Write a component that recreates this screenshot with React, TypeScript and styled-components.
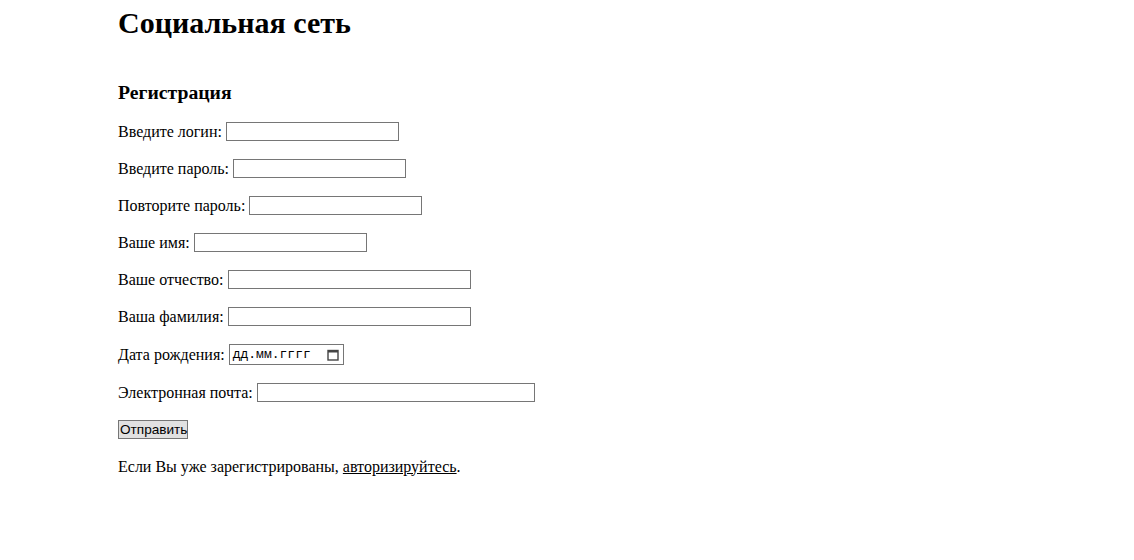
import React from "react";
import styled, { createGlobalStyle } from "styled-components";

const Global = createGlobalStyle`
  html, body { margin: 0; padding: 0; background: #ffffff; }
  body { font-family: "Liberation Serif", "Times New Roman", serif; color: #000; }
`;

const Page = styled.div`
  padding: 5px 118px 0;
  display: flex;
  flex-direction: column;
`;

const Title = styled.h1`
  margin: 0;
  font-size: 30px;
  font-weight: bold;
  line-height: 36px;
`;

const Subtitle = styled.h3`
  margin: 41px 0 0;
  font-size: 19.7px;
  font-weight: bold;
  line-height: 21px;
`;

const Form = styled.form`
  display: flex;
  flex-direction: column;
  gap: 16px;
  margin-top: 18px;
`;

const Row = styled.div<{ $h?: number }>`
  display: flex;
  align-items: center;
  height: ${(p) => p.$h ?? 21}px;
  font-size: 16px;
  white-space: pre;
`;

const Field = styled.input<{ $w: number }>`
  box-sizing: border-box;
  width: ${(p) => p.$w}px;
  height: 19px;
  margin: 0 0 0 4px;
  padding: 1px 2px;
  border: 1px solid #767676;
  border-radius: 0;
  background: #fff;
  font-family: "Liberation Sans", Arial, sans-serif;
  font-size: 13.33px;
  outline: none;
`;

const DateBox = styled.label`
  box-sizing: border-box;
  width: 115px;
  height: 21px;
  margin-left: 4px;
  padding: 0 4px 0 3px;
  border: 1px solid #767676;
  display: flex;
  align-items: center;
  justify-content: space-between;
  background: #fff;
`;

const DateText = styled.span`
  font-family: "Liberation Mono", "Courier New", monospace;
  font-size: 13px;
  color: #000;
`;

const Submit = styled.button`
  box-sizing: border-box;
  height: 19px;
  width: 70px;
  padding: 0 1px;
  border: 1px solid #767676;
  border-radius: 0;
  background: #e1e1e1;
  font-family: "Liberation Sans", Arial, sans-serif;
  font-size: 13.6px;
  color: #000;
  line-height: 17px;
`;

const Link = styled.a`
  color: #000;
  text-decoration: underline;
`;

const CalendarIcon = () => (
  <svg width="12" height="12" viewBox="0 0 12 12">
    <rect x="1" y="1.5" width="10" height="9.5" fill="none" stroke="#444" strokeWidth="1.4" />
    <rect x="1" y="1" width="10" height="2.5" fill="#444" />
  </svg>
);

export default function App() {
  const fields: [string, number][] = [
    ["Введите логин:", 173],
    ["Введите пароль:", 173],
    ["Повторите пароль:", 173],
    ["Ваше имя:", 173],
    ["Ваше отчество:", 243],
    ["Ваша фамилия:", 243],
  ];
  return (
    <>
      <Global />
      <Page>
        <Title>Социальная сеть</Title>
        <Subtitle>Регистрация</Subtitle>
        <Form onSubmit={(e) => e.preventDefault()}>
          {fields.map(([label, w]) => (
            <Row key={label}>
              {label}
              <Field $w={w} type="text" />
            </Row>
          ))}
          <Row $h={23}>
            Дата рождения:
            <DateBox>
              <DateText>дд.мм.гггг</DateText>
              <CalendarIcon />
            </DateBox>
          </Row>
          <Row>
            Электронная почта:
            <Field $w={278} type="email" />
          </Row>
          <Row>
            <Submit type="submit">Отправить</Submit>
          </Row>
          <Row>
            Если Вы уже зарегистрированы, <Link href="#">авторизируйтесь</Link>.
          </Row>
        </Form>
      </Page>
    </>
  );
}
